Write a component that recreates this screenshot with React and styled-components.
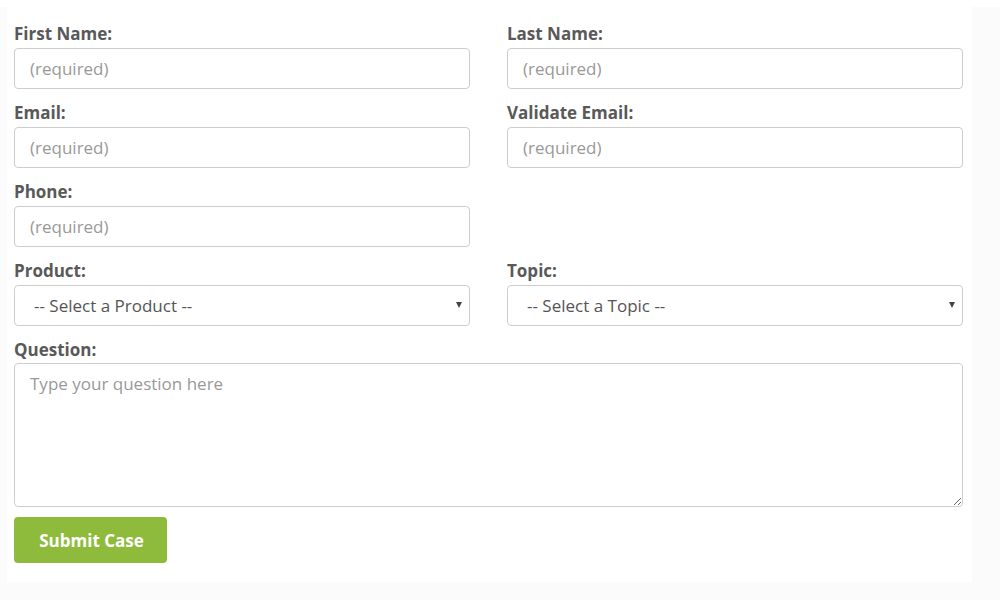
import React from 'react';
import styled, { createGlobalStyle } from 'styled-components';

const GlobalStyle = createGlobalStyle`
  html, body {
    margin: 0;
    padding: 0;
    background: #ffffff;
    font-family: 'Open Sans', 'Liberation Sans', sans-serif;
  }
`;

const Page = styled.div`
  width: 1000px;
  height: 593px;
  margin-top: 7px;
  background: #fbfbfb;
  box-sizing: border-box;
  padding: 0 28px 0 7px;
`;

const Panel = styled.form`
  background: #ffffff;
  height: 575px;
  box-sizing: border-box;
  padding: 14px 9px 0 7px;
`;

const Grid = styled.div`
  display: grid;
  grid-template-columns: 456px 456px;
  column-gap: 37px;
`;

const Field = styled.div`
  display: flex;
  flex-direction: column;
  margin-bottom: ${(p) => (p.$wide ? '10px' : '11px')};
  grid-column: ${(p) => (p.$wide ? '1 / span 2' : 'auto')};
`;

const Label = styled.label`
  font-size: 17px;
  font-weight: 700;
  line-height: 22px;
  color: #595959;
  padding-top: 2px;
  margin-bottom: ${(p) => (p.$tight ? '2px' : '3px')};
`;

const inputBase = `
  box-sizing: border-box;
  width: 100%;
  border: 1px solid #cdcdcd;
  border-radius: 4px;
  background: #ffffff;
  font-family: 'Open Sans', 'Liberation Sans', sans-serif;
  font-size: 17px;
  color: #555555;
  outline: none;
`;

const Input = styled.input`
  ${inputBase}
  height: 41px;
  padding: 0 15px;
  &::placeholder {
    color: #999999;
  }
`;

const SelectWrap = styled.div`
  position: relative;
`;

const Select = styled.select`
  ${inputBase}
  height: 41px;
  padding: 0 30px 0 19px;
  appearance: none;
  -webkit-appearance: none;
`;

const Arrow = styled.span`
  position: absolute;
  right: 8px;
  top: 17px;
  width: 0;
  height: 0;
  border-left: 3.5px solid transparent;
  border-right: 3.5px solid transparent;
  border-top: 6px solid #444444;
  pointer-events: none;
`;

const TextArea = styled.textarea`
  ${inputBase}
  height: 144px;
  padding: 9px 15px;
  resize: vertical;
  line-height: 22px;
  &::placeholder {
    color: #999999;
  }
`;

const SubmitButton = styled.button`
  width: 153px;
  height: 46px;
  border: none;
  border-radius: 4px;
  background: #8fbb3d;
  color: #ffffff;
  font-family: 'Open Sans', 'Liberation Sans', sans-serif;
  font-size: 17px;
  font-weight: 700;
  padding: 0 0 0 2px;
  cursor: pointer;
`;

function TextField({ label }) {
  return (
    <Field>
      <Label>{label}</Label>
      <Input placeholder="(required)" />
    </Field>
  );
}

function SelectField({ label, placeholder }) {
  return (
    <Field>
      <Label>{label}</Label>
      <SelectWrap>
        <Select defaultValue="">
          <option value="">{placeholder}</option>
        </Select>
        <Arrow />
      </SelectWrap>
    </Field>
  );
}

export default function App() {
  return (
    <>
      <GlobalStyle />
      <Page>
        <Panel onSubmit={(e) => e.preventDefault()}>
          <Grid>
            <TextField label="First Name:" />
            <TextField label="Last Name:" />
            <TextField label="Email:" />
            <TextField label="Validate Email:" />
            <TextField label="Phone:" />
            <div />
            <SelectField label="Product:" placeholder="-- Select a Product --" />
            <SelectField label="Topic:" placeholder="-- Select a Topic --" />
            <Field $wide>
              <Label $tight>Question:</Label>
              <TextArea placeholder="Type your question here" />
            </Field>
          </Grid>
          <SubmitButton type="submit">Submit Case</SubmitButton>
        </Panel>
      </Page>
    </>
  );
}
